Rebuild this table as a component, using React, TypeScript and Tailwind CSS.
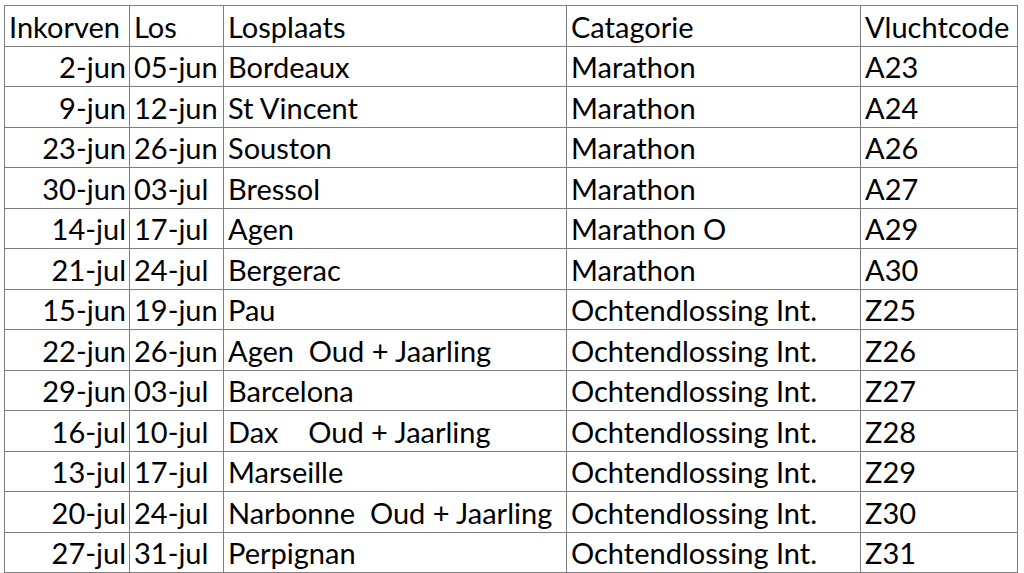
const HEAD = ['Inkorven', 'Los', 'Losplaats', 'Catagorie', 'Vluchtcode']

const ROWS: [string, string, string, string, string][] = [
  ['2-jun', '05-jun', 'Bordeaux', 'Marathon', 'A23'],
  ['9-jun', '12-jun', 'St Vincent', 'Marathon', 'A24'],
  ['23-jun', '26-jun', 'Souston', 'Marathon', 'A26'],
  ['30-jun', '03-jul', 'Bressol', 'Marathon', 'A27'],
  ['14-jul', '17-jul', 'Agen', 'Marathon O', 'A29'],
  ['21-jul', '24-jul', 'Bergerac', 'Marathon', 'A30'],
  ['15-jun', '19-jun', 'Pau', 'Ochtendlossing Int.', 'Z25'],
  ['22-jun', '26-jun', 'Agen  Oud + Jaarling', 'Ochtendlossing Int.', 'Z26'],
  ['29-jun', '03-jul', 'Barcelona', 'Ochtendlossing Int.', 'Z27'],
  ['16-jul', '10-jul', 'Dax    Oud + Jaarling', 'Ochtendlossing Int.', 'Z28'],
  ['13-jul', '17-jul', 'Marseille', 'Ochtendlossing Int.', 'Z29'],
  ['20-jul', '24-jul', 'Narbonne  Oud + Jaarling', 'Ochtendlossing Int.', 'Z30'],
  ['27-jul', '31-jul', 'Perpignan', 'Ochtendlossing Int.', 'Z31'],
]

const cell = 'border border-[#7f7f7f] h-[40.5px] p-0 pl-[4px] pr-[3px] align-bottom pb-[5px] whitespace-pre leading-none'

export default function App() {
  return (
    <div className="w-[1024px] h-[573px] bg-white pl-[4px] pt-[5px] overflow-hidden">
      <table
        className="border-collapse table-fixed text-black text-[29px]"
        style={{ fontFamily: 'Lato, "Open Sans", sans-serif' }}
      >
        <colgroup>
          <col className="w-[125px]" />
          <col className="w-[94px]" />
          <col className="w-[343px]" />
          <col className="w-[294px]" />
          <col className="w-[157px]" />
        </colgroup>
        <thead>
          <tr>
            {HEAD.map(h => (
              <th key={h} className={`${cell} text-left font-normal`}>{h}</th>
            ))}
          </tr>
        </thead>
        <tbody>
          {ROWS.map(r => (
            <tr key={r[4]}>
              <td className={`${cell} text-right`}>{r[0]}</td>
              <td className={`${cell} text-left`}>{r[1]}</td>
              <td className={`${cell} text-left`}>{r[2]}</td>
              <td className={`${cell} text-left`}>{r[3]}</td>
              <td className={`${cell} text-left`}>{r[4]}</td>
            </tr>
          ))}
        </tbody>
      </table>
    </div>
  )
}
